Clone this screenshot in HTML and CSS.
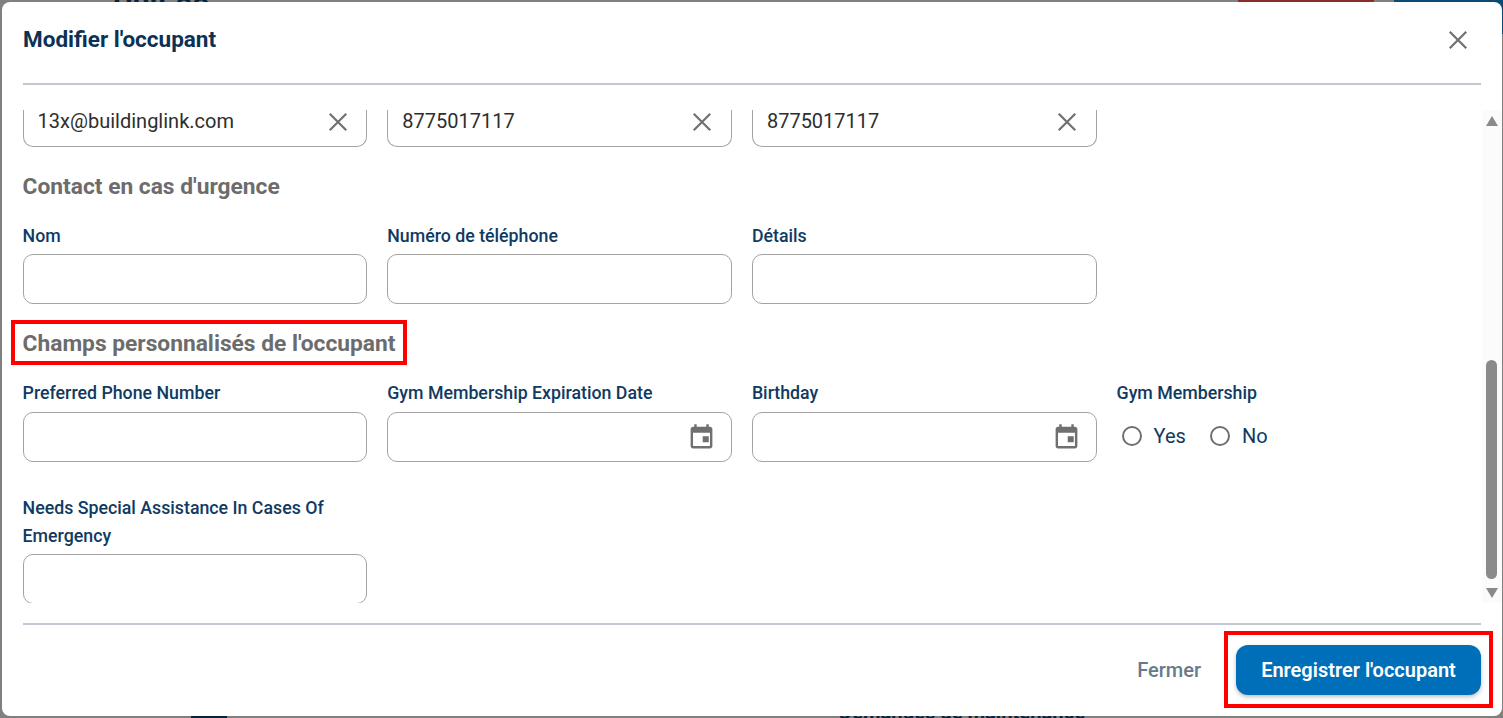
FILE: index.html
```html
<!DOCTYPE html>
<html lang="fr">
<head>
<meta charset="utf-8">
<title>Modifier l'occupant</title>
<link rel="stylesheet" href="styles.css">
</head>
<body>
<div class="backdrop">
  <span class="bg-unit">Unit 88</span>
  <span class="bg-red"></span>
  <span class="bg-blue"></span>
  <span class="bg-icon"></span>
  <span class="bg-req">Demandes de maintenance</span>
</div>
<div class="dialog">
  <header class="dialog-head">
    <h2 class="dialog-title">Modifier l'occupant</h2>
    <svg class="close-icon" viewBox="0 0 20 20"><path d="M2.500 2.500 17.500 17.500M17.500 2.500 2.500 17.500"/></svg>
  </header>
  <div class="rule"></div>
  <div class="dialog-body">
    <div class="scroll-content">
      <div class="form-grid first-row">
        <div class="input clip-top"><span class="value">13x@buildinglink.com</span><svg class="clear-icon" viewBox="0 0 20 20"><path d="M2.500 2.500 17.500 17.500M17.500 2.500 2.500 17.500"/></svg></div>
        <div class="input clip-top"><span class="value">8775017117</span><svg class="clear-icon" viewBox="0 0 20 20"><path d="M2.500 2.500 17.500 17.500M17.500 2.500 2.500 17.500"/></svg></div>
        <div class="input clip-top"><span class="value">8775017117</span><svg class="clear-icon" viewBox="0 0 20 20"><path d="M2.500 2.500 17.500 17.500M17.500 2.500 2.500 17.500"/></svg></div>
      </div>
      <h3 class="section-title"><span>Contact en cas d'urgence</span></h3>
      <div class="form-grid">
        <div class="field"><label class="label">Nom</label><div class="input"></div></div>
        <div class="field"><label class="label">Numéro de téléphone</label><div class="input"></div></div>
        <div class="field"><label class="label">Détails</label><div class="input"></div></div>
      </div>
      <h3 class="section-title"><span class="highlight">Champs personnalisés de l'occupant</span></h3>
      <div class="form-grid custom-row">
        <div class="field"><label class="label">Preferred Phone Number</label><div class="input"></div></div>
        <div class="field"><label class="label">Gym Membership Expiration Date</label><div class="input"><svg class="cal-icon" viewBox="0 0 24 24"><path d="M19 3h-1V1h-2v2H8V1H6v2H5c-1.100 0-2 .9-2 2v14c0 1.100.9 2 2 2h14c1.100 0 2-.9 2-2V5c0-1.100-.9-2-2-2zm0 16H5V8h14v11zm-6-8h5v5h-5z"/></svg></div></div>
        <div class="field"><label class="label">Birthday</label><div class="input"><svg class="cal-icon" viewBox="0 0 24 24"><path d="M19 3h-1V1h-2v2H8V1H6v2H5c-1.100 0-2 .9-2 2v14c0 1.100.9 2 2 2h14c1.100 0 2-.9 2-2V5c0-1.100-.9-2-2-2zm0 16H5V8h14v11zm-6-8h5v5h-5z"/></svg></div></div>
        <div class="field"><label class="label">Gym Membership</label>
          <div class="radios">
            <span class="radio"><span class="radio-dot"></span>Yes</span>
            <span class="radio"><span class="radio-dot"></span>No</span>
          </div>
        </div>
      </div>
      <div class="form-grid last-row">
        <div class="field"><label class="label">Needs Special Assistance In Cases Of Emergency</label><div class="input"></div></div>
      </div>
    </div>
    <div class="scrollbar">
      <span class="arrow-up"></span>
      <div class="track"><div class="thumb"></div></div>
      <span class="arrow-down"></span>
    </div>
  </div>
  <div class="rule rule-bottom"></div>
  <footer class="dialog-foot">
    <button class="btn-text">Fermer</button>
    <span class="highlight-btn"><button class="btn-primary">Enregistrer l'occupant</button></span>
  </footer>
</div>
</body>
</html>
```

FILE: styles.css
```css
* { box-sizing: border-box; }
html, body { margin: 0; height: 100%; overflow: hidden; }
body {
  background: #808080;
  font-family: Roboto, "Liberation Sans", sans-serif;
  color: #0b3155;
  padding: 2px 1px 2px 2px;
}
.backdrop { position: absolute; inset: 0; overflow: hidden; }
.bg-unit { position: absolute; left: 113px; top: -18px; font-size: 30px; font-weight: 700; color: #06233c; }
.bg-red { position: absolute; left: 1238px; top: 0; width: 136px; height: 3px; background: #8c2b2b; }
.bg-blue { position: absolute; left: 1394px; top: 0; width: 109px; height: 34px; background: #0a4a75; }
.bg-icon { position: absolute; left: 191px; top: 714px; width: 36px; height: 4px; background: #06233c; }
.bg-req { position: absolute; left: 839px; top: 700px; font-size: 20.2px; font-weight: 700; color: #06233c; }

.dialog {
  position: relative;
  height: 714px;
  width: 1500px;
  background: #fff;
  border-radius: 8px;
  display: flex;
  flex-direction: column;
}
.dialog-head {
  height: 81px;
  flex: none;
  display: flex;
  align-items: flex-start;
  justify-content: space-between;
  padding: 24px 33px 0 21px;
}
.dialog-title { margin: 0; font-size: 22.5px; line-height: 26px; font-weight: 700; color: #0b3155; }
.close-icon { width: 22px; height: 22px; margin-top: 2.5px; fill: none; stroke: #707070; stroke-width: 2; }
.rule { height: 2px; flex: none; margin: 0 21px; background: #c3c7d3; }
.dialog-body {
  flex: none;
  height: 493px;
  margin-top: 25px;
  display: flex;
  overflow: hidden;
}
.scroll-content { flex: 1; overflow: hidden; padding: 0 20px 0 20.6px; }
.form-grid {
  display: grid;
  grid-template-columns: repeat(4, 344.67px);
  column-gap: 20px;
}
.first-row { height: 37px; }
.input {
  position: relative;
  height: 50px;
  border: 1px solid #a3a3a3;
  border-radius: 10px;
  display: flex;
  align-items: center;
  padding: 0 14px;
  background: #fff;
}
.clip-top { height: 37px; border-top: 0; border-top-left-radius: 0; border-top-right-radius: 0; align-items: flex-start; }
.value { font-size: 20px; line-height: 23px; color: #2e2e2e; }
.clear-icon { position: absolute; right: 17.5px; top: 0.5px; width: 22px; height: 22px; fill: none; stroke: #707070; stroke-width: 2; }
.cal-icon { position: absolute; right: 15px; top: 10px; width: 29px; height: 29px; fill: #707070; }
.section-title { margin: 27px 0 0; font-size: 22.75px; line-height: 26px; font-weight: 700; color: #6c6c6c; }
.highlight { display: inline-block; margin: -11px -12px -8px; padding: 11px 12px 8px; outline: 4px solid #f00; outline-offset: -4px; }
.field { display: flex; flex-direction: column; }
.label { font-size: 17.75px; line-height: 28px; font-weight: 500; color: #103a61; margin-bottom: 4px; }
.form-grid:not(.first-row) { margin-top: 22px; }
.custom-row .label { margin-bottom: 5px; }
.form-grid.last-row { margin-top: 32px; }
.last-row .label { margin-bottom: 4px; }
.radios { display: flex; gap: 24px; padding: 0 0 0 5px; height: 48px; align-items: center; }
.radio { display: inline-flex; align-items: center; gap: 12px; font-size: 20px; color: #103a61; }
.radio-dot { width: 20px; height: 20px; border: 2px solid #707070; border-radius: 50%; }
.scrollbar { flex: none; width: 20px; padding-right: 1px; background: #fbfbfb; display: flex; flex-direction: column; align-items: center; }
.arrow-up, .arrow-down { flex: none; width: 0; height: 0; border-left: 6.5px solid transparent; border-right: 6.5px solid transparent; }
.arrow-up { margin-top: 6px; border-bottom: 10px solid #8a8a8a; }
.arrow-down { margin-bottom: 5px; border-top: 10px solid #8a8a8a; }
.track { flex: 1; width: 100%; display: flex; justify-content: center; align-items: flex-end; padding-bottom: 9px; }
.thumb { width: 11px; height: 219px; background: #8a8a8a; border-radius: 6px; }
.rule-bottom { margin-top: 20px; }
.dialog-foot {
  flex: 1;
  display: flex;
  justify-content: flex-end;
  align-items: flex-start;
  padding: 20px 21px 0 0;
  gap: 23px;
}
.btn-text { border: 0; background: none; padding: 0; height: 50px; font: 500 20px Roboto, sans-serif; color: #68798c; }
.highlight-btn { display: inline-flex; margin: -14px -12px -13px 0; padding: 14px 12px 13px; outline: 4px solid #f00; outline-offset: -4px; }
.btn-primary {
  height: 50px;
  width: 245px;
  border: 0;
  border-radius: 12px;
  background: #006fb9;
  color: #fff;
  font: 600 20px Roboto, sans-serif;
  box-shadow: 0 2px 4px rgba(0,0,0,.25);
  padding: 0;
}
```
